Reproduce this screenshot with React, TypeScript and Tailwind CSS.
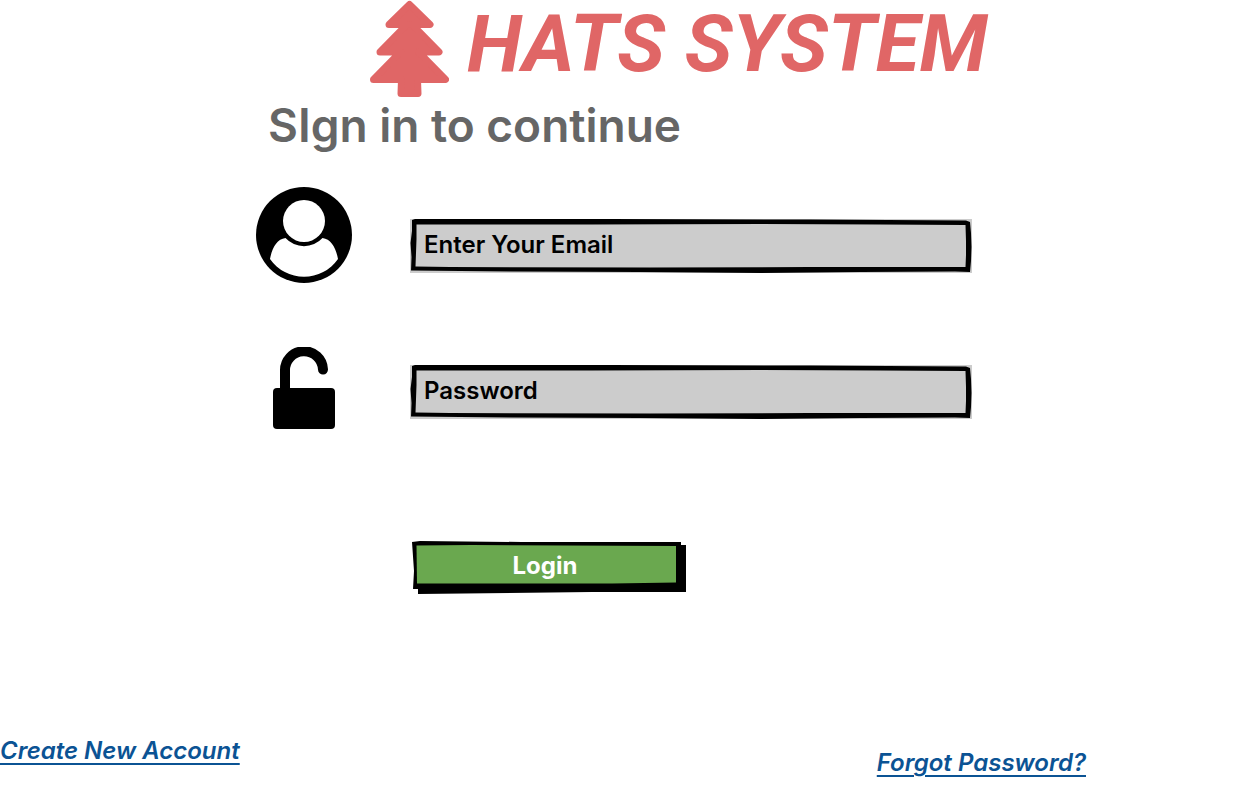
import type { InputHTMLAttributes, ReactNode } from "react";

function TreeIcon() {
  return (
    <svg viewBox="0 0 79 97" className="h-[97px] w-[79px] shrink-0" aria-hidden="true">
      <path
        d="M39.5 4.500 60 24.500H42L69 52H48.500L75.500 79.500H47.500L48 93.500H31L31.500 79.500H3.500L30.500 52H10L37 24.500H19Z"
        fill="#e06666"
        stroke="#e06666"
        strokeWidth="7"
        strokeLinejoin="round"
      />
    </svg>
  );
}

function UserIcon() {
  return (
    <svg viewBox="0 0 96 96" className="size-24" aria-hidden="true">
      <circle cx="48" cy="48" r="48" />
      <circle cx="48" cy="34" r="21" fill="#fff" />
      <path
        d="M14 72C16 61 21 52 29.500 51A25 25 0 0 0 66.500 51C75 52 80 61 82 72A41.500 41.500 0 0 1 14 72Z"
        fill="#fff"
      />
    </svg>
  );
}

function LockIcon() {
  return (
    <svg viewBox="0 0 62 82" className="h-[82px] w-[62px]" aria-hidden="true">
      <rect y="41" width="62" height="41" rx="4" />
      <path
        d="M12 46V24A19 19 0 0 1 50 22.500"
        fill="none"
        stroke="#000"
        strokeWidth="10"
        strokeLinecap="round"
      />
    </svg>
  );
}

function InputFrame() {
  return (
    <svg
      viewBox="0 0 562 54"
      preserveAspectRatio="none"
      className="pointer-events-none absolute inset-0 size-full"
      aria-hidden="true"
    >
      <path
        fillRule="evenodd"
        d="M2 1 5 0 200 0 400 .5 556 1.500 560 3 561 14 561.500 28 561 42 560 53 545 52.500 450 53 350 54 230 53 100 52.500 1 51.500 1.500 38 .5 24 2 12ZM6.500 5.500 6.500 20 6 34 5.500 47.500 40 48 240 48.500 400 48 555.500 48 556 36 556 22 555.500 6 470 5.500 350 5 180 5.500Z"
      />
    </svg>
  );
}

function Field({
  icon,
  label,
  ...props
}: { icon: ReactNode; label: string } & InputHTMLAttributes<HTMLInputElement>) {
  return (
    <div className="flex items-end gap-[58px]">
      <label htmlFor={props.id} aria-label={label} className="flex w-24 shrink-0 justify-center">
        {icon}
      </label>
      <div className="flex-1 pb-2.5">
        <div className="relative bg-[#ccc]">
          <input
            {...props}
            placeholder={label}
            className="block h-[54px] w-full bg-transparent px-[14px] pb-1 text-[24px] font-semibold text-black outline-none placeholder:text-black"
          />
          <InputFrame />
        </div>
      </div>
    </div>
  );
}

export default function App() {
  return (
    <div className="min-h-screen bg-white font-['Inter',sans-serif] font-semibold text-black">
      <header className="flex items-start gap-[18px] pl-[370px]">
        <TreeIcon />
        <h1 className="font-['Roboto',sans-serif] text-[80px] leading-[88px] font-bold whitespace-nowrap text-[#e06666] italic">
          HATS SYSTEM
        </h1>
      </header>
      <main className="pr-[286px] pl-64">
        <h2 className="pl-3 text-[46px] leading-[56px] font-semibold whitespace-nowrap text-[#666]">
          SIgn in to continue
        </h2>
        <form className="pt-[34px]" onSubmit={(event) => event.preventDefault()}>
          <div className="flex flex-col gap-16">
            <Field icon={<UserIcon />} id="email" type="email" label="Enter Your Email" />
            <Field icon={<LockIcon />} id="password" type="password" label="Password" />
          </div>
          <button
            type="submit"
            className="relative mt-28 ml-[156px] block h-[53px] w-[274px] cursor-pointer pr-2 pb-1 text-[24px] font-bold text-white"
          >
            <svg
              viewBox="0 0 274 53"
              preserveAspectRatio="none"
              className="absolute inset-0 size-full"
              aria-hidden="true"
            >
              <path d="M0 1 8 0 110 1 269 1V4H274V51L180 51 6 53V48H1L2 30Z" />
              <path d="M4.500 4.500 60 4 264 5V41.500L200 42.500 130 42.500 60 42.500 5 42.500Z" fill="#6aa84f" />
            </svg>
            <span className="relative">Login</span>
          </button>
        </form>
      </main>
      <footer className="mt-[141px] flex items-start justify-between pr-[172px] text-[24px] leading-8 text-[#0b5394] italic">
        <a href="#create" className="underline decoration-2 underline-offset-4">
          Create New Account
        </a>
        <a href="#forgot" className="pt-3 underline decoration-2 underline-offset-4">
          Forgot Password?
        </a>
      </footer>
    </div>
  );
}
